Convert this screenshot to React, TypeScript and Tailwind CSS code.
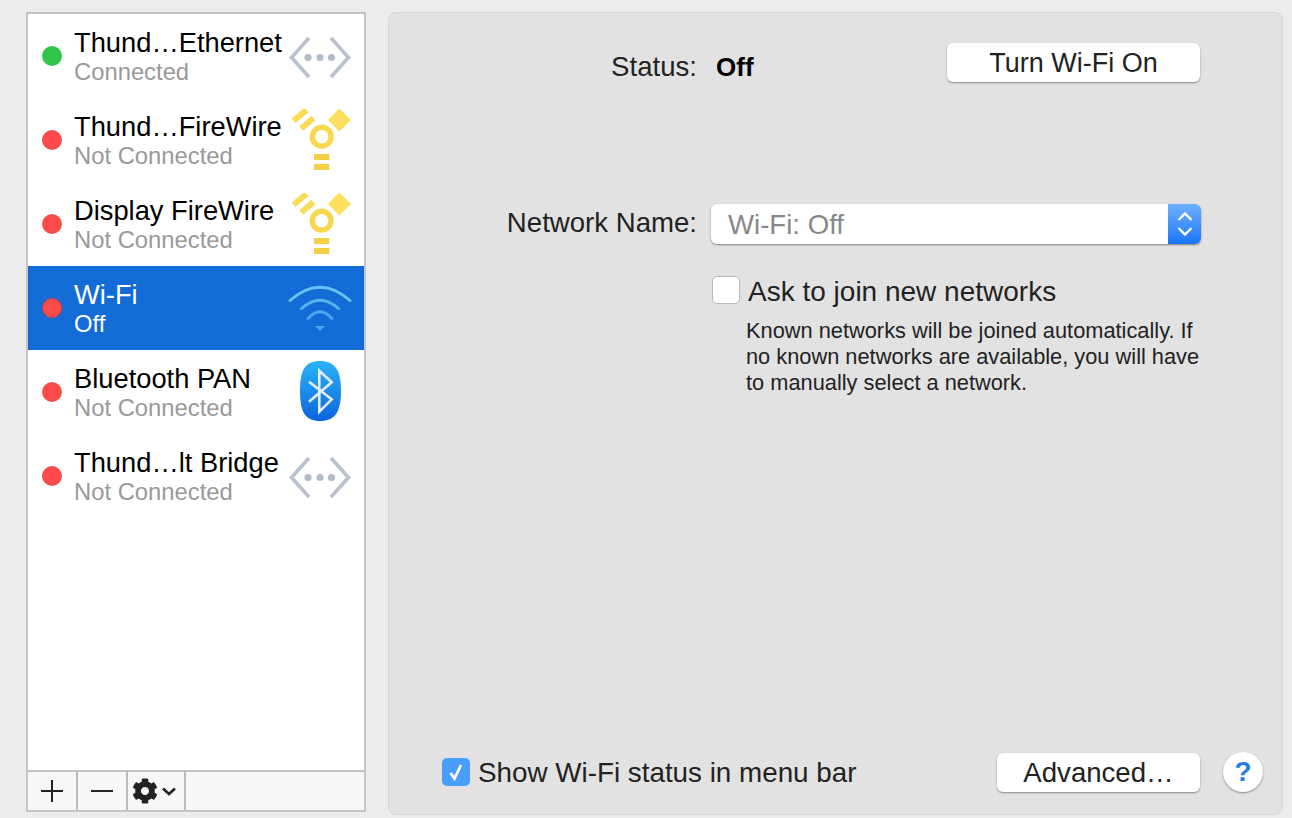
import { FaCog } from "react-icons/fa";

const services = [
  { name: "Thund…Ethernet", status: "Connected", dot: "bg-[#2fc64a]", icon: "dots" },
  { name: "Thund…FireWire", status: "Not Connected", dot: "bg-[#fc4a4a]", icon: "firewire" },
  { name: "Display FireWire", status: "Not Connected", dot: "bg-[#fc4a4a]", icon: "firewire" },
  { name: "Wi-Fi", status: "Off", dot: "bg-[#fc4a4a]", icon: "wifi", selected: true },
  { name: "Bluetooth PAN", status: "Not Connected", dot: "bg-[#fc4a4a]", icon: "bluetooth" },
  { name: "Thund…lt Bridge", status: "Not Connected", dot: "bg-[#fc4a4a]", icon: "dots" },
];

function ServiceIcon({ kind }: { kind: string }) {
  return (
    <svg width="64" height="64" viewBox="0 0 64 64" fill="none" className="mr-3 mt-[11px] shrink-0 self-start">
      {kind === "dots" && (
        <>
          <path d="M21 13 L3.5 32.5 L21 52 M43 13 L60.5 32.5 L43 52" stroke="#b9c1cf" strokeWidth="3.6" />
          <circle cx="20" cy="32.5" r="3.6" fill="#b3bccb" />
          <circle cx="32" cy="32.5" r="3.6" fill="#b3bccb" />
          <circle cx="43.5" cy="32.5" r="3.6" fill="#b3bccb" />
        </>
      )}
      {kind === "firewire" && (
        <>
          <circle cx="33.7" cy="27.7" r="9.4" stroke="#f8d84e" strokeWidth="5.4" />
          <rect x="26" y="45" width="15.3" height="6" fill="#f5d046" />
          <rect x="26" y="55" width="15.3" height="6" fill="#f5d046" />
          <path d="M51.3 -0.5 L63 11 L51.3 22.5 L40 11 Z" fill="#fcdf5c" />
          <rect x="3.5" y="3.3" width="17" height="6" transform="rotate(-40 12 6.3)" fill="#fbdc58" />
          <rect x="11.3" y="11.3" width="16" height="6" transform="rotate(-40 19.3 14.3)" fill="#fbdc58" />
        </>
      )}
      {kind === "wifi" && (
        <>
          <path d="M2 23.5 Q32 -3 62 23.5" stroke="#6ac2f2" strokeWidth="3" strokeLinecap="round" />
          <path d="M13.5 31.5 Q32 15 50.5 31.5" stroke="#58b4ec" strokeWidth="3" strokeLinecap="round" />
          <path d="M20 41.5 Q32 28 44 41.5" stroke="#4aa8e8" strokeWidth="3" strokeLinecap="round" />
          <path d="M27 49 H37 L32 54 Z" fill="#4aa8e8" />
        </>
      )}
      {kind === "bluetooth" && (
        <>
          <defs>
            <linearGradient id="bt" x1="0" y1="0" x2="0" y2="1">
              <stop offset="0" stopColor="#2bb2f8" />
              <stop offset="1" stopColor="#0b66df" />
            </linearGradient>
          </defs>
          <path d="M32 0 C47 0 53 9 53 30 C53 51 47 60 32 60 C17 60 12 51 12 30 C12 9 17 0 32 0 Z" fill="url(#bt)" />
          <path d="M21 20.7 L43.7 38.3 L31.3 50.7 V9.7 L43.7 21.3 L21 40.7" stroke="#e6eff9" strokeWidth="2.6" />
        </>
      )}
    </svg>
  );
}

export default function App() {
  return (
    <div className="flex h-[818px] w-full gap-[22px] overflow-hidden bg-[#ececec] pl-[26px] pt-3 font-['Liberation_Sans',Arial,sans-serif] text-[27.6px] text-[#222]">
      {/* Service list */}
      <div className="flex h-[800px] w-[340px] shrink-0 flex-col border-2 border-[#c4c4c4] bg-white">
        <div className="flex-1">
          {services.map((s) => (
            <div key={s.name} className={`flex h-[84px] ${s.selected ? "bg-[#136bd6]" : ""}`}>
              <div className="flex h-[84px] min-w-0 flex-1 items-center pl-[14px]">
                <span className={`h-5 w-5 shrink-0 rounded-full ${s.dot} ${s.selected ? "border border-[#d93c3c]" : ""}`} />
                <div className="ml-3 whitespace-nowrap pt-[2px]">
                  <div className={`text-[27.3px] leading-[29px] ${s.selected ? "text-white" : "text-black"}`}>{s.name}</div>
                  <div className={`text-[23.8px] leading-[29px] ${s.selected ? "text-white" : "text-[#999]"}`}>{s.status}</div>
                </div>
              </div>
              <ServiceIcon kind={s.icon} />
            </div>
          ))}
        </div>
        <div className="flex h-10 border-t-2 border-[#c4c4c4] bg-[#f7f7f7] text-[#222]">
          <button type="button" className="flex w-[50px] items-center justify-center border-r-2 border-[#bbb]">
            <svg width="24" height="24" viewBox="0 0 24 24" stroke="#222" strokeWidth="2">
              <path d="M1 12 H23 M12 1 V23" />
            </svg>
          </button>
          <button type="button" className="flex w-[50px] items-center justify-center border-r-2 border-[#bbb]">
            <svg width="24" height="24" viewBox="0 0 24 24" stroke="#222" strokeWidth="2">
              <path d="M1 12 H23" />
            </svg>
          </button>
          <button type="button" className="flex w-[58px] items-center gap-1 border-r-2 border-[#bbb] pl-1">
            <FaCog size={26} color="#222" />
            <svg width="14" height="9" viewBox="0 0 14 9" fill="none" stroke="#222" strokeWidth="2.6">
              <path d="M1 1.5 L7 7 L13 1.5" />
            </svg>
          </button>
        </div>
      </div>

      {/* Wi-Fi detail */}
      <div className="flex h-[803px] w-[895px] shrink-0 flex-col rounded-lg border border-[#d6d6d6] bg-[#e2e2e2] pt-[30px]">
        <div className="flex">
          <div className="w-[308px] pt-[9px] text-right leading-[30px]">Status:</div>
          <div className="ml-[19px] w-[231px] pt-[9px] text-[26px] font-bold leading-[30px] text-black">Off</div>
          <button type="button" className="h-[39px] w-[253px] rounded-md bg-white text-[27px] leading-[38px] shadow-[0_1px_2px_rgba(0,0,0,0.4)]">
            Turn Wi-Fi On
          </button>
        </div>

        <div className="mt-[122px] flex">
          <div className="w-[308px] pt-[4px] text-right leading-[30px]">Network Name:</div>
          <div className="ml-[14px] flex h-10 w-[490px] overflow-hidden rounded-md bg-white shadow-[0_1px_2px_rgba(0,0,0,0.45)]">
            <div className="flex-1 pl-[17px] leading-[42px] text-[#888]">Wi-Fi: Off</div>
            <div className="flex w-[33px] items-center justify-center bg-gradient-to-b from-[#6cb0ff] to-[#1674f6]">
              <svg width="16" height="28" viewBox="0 0 16 28" fill="none" stroke="#fff" strokeWidth="2.4">
                <path d="M1.5 10 L8 3.5 L14.5 10 M1.5 18 L8 24.5 L14.5 18" />
              </svg>
            </div>
          </div>
        </div>

        <div className="ml-[323px] mt-8 flex h-7 items-center gap-2">
          <span className="h-7 w-7 shrink-0 rounded-[5px] border border-[#b8b8b8] bg-white" />
          <span className="pt-[4px] text-[28px]">Ask to join new networks</span>
        </div>

        <p className="ml-[357px] mt-[14px] whitespace-nowrap text-[21.8px] leading-[26px]">
          Known networks will be joined automatically. If
          <br />
          no known networks are available, you will have
          <br />
          to manually select a network.
        </p>

        <div className="mt-auto flex items-center pb-5 pl-[53px] pr-[19px]">
          <span className="flex h-7 w-7 items-center justify-center rounded-[5px] bg-[#4a9df8]">
            <svg width="18" height="20" viewBox="0 0 18 20" fill="none" stroke="#fff" strokeWidth="2.8">
              <path d="M3.5 11 L7.5 16.5 L14 3" />
            </svg>
          </span>
          <span className="ml-2 pt-[2px] text-[27.8px]">Show Wi-Fi status in menu bar</span>
          <button type="button" className="ml-auto mt-[1px] h-[39px] w-[203px] rounded-md bg-white leading-[38px] shadow-[0_1px_2px_rgba(0,0,0,0.4)]">
            Advanced…
          </button>
          <button type="button" className="ml-[23px] flex h-10 w-10 items-center justify-center rounded-full bg-white text-[28px] font-bold text-[#1f7fe8] shadow-[0_1px_2px_rgba(0,0,0,0.4)]">
            ?
          </button>
        </div>
      </div>
    </div>
  );
}
